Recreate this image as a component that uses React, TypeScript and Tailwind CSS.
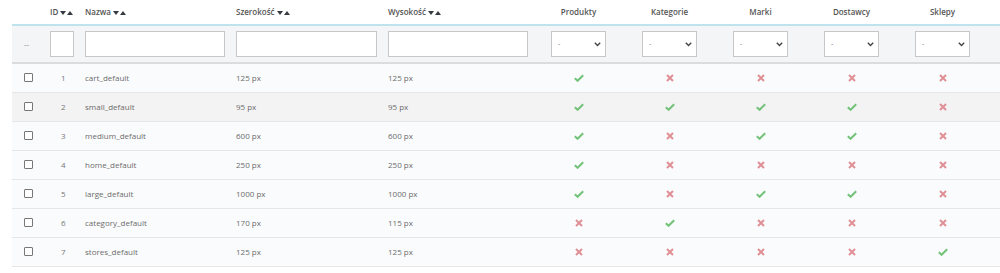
import React from "react";

type Row = { id: number; name: string; w: string; h: string; f: boolean[] };

const rows: Row[] = [
  { id: 1, name: "cart_default", w: "125 px", h: "125 px", f: [true, false, false, false, false] },
  { id: 2, name: "small_default", w: "95 px", h: "95 px", f: [true, true, true, true, false] },
  { id: 3, name: "medium_default", w: "600 px", h: "600 px", f: [true, false, true, true, false] },
  { id: 4, name: "home_default", w: "250 px", h: "250 px", f: [true, false, false, false, false] },
  { id: 5, name: "large_default", w: "1000 px", h: "1000 px", f: [true, false, true, true, false] },
  { id: 6, name: "category_default", w: "170 px", h: "115 px", f: [false, true, false, false, false] },
  { id: 7, name: "stores_default", w: "125 px", h: "125 px", f: [false, false, false, false, true] },
];

const Check = () => (
  <svg width="10" height="8" viewBox="0 0 10 8" className="inline-block">
    <path d="M0.8 4.2 L3.6 6.8 L9.2 1.2" fill="none" stroke="#72c279" strokeWidth="2" />
  </svg>
);

const Cross = () => (
  <svg width="8" height="8" viewBox="0 0 8 8" className="inline-block">
    <path d="M1 1 L7 7 M7 1 L1 7" fill="none" stroke="#e08f95" strokeWidth="2" />
  </svg>
);

const Sort = () => (
  <span className="ml-[2px] inline-flex items-center gap-[1px] align-middle">
    <svg width="6" height="4" viewBox="0 0 6 4"><path d="M0 0 H6 L3 4 Z" fill="#363a41" /></svg>
    <svg width="6" height="4" viewBox="0 0 6 4"><path d="M0 4 H6 L3 0 Z" fill="#363a41" /></svg>
  </span>
);

const Select = () => (
  <div className="mx-auto flex h-[26px] w-[55px] items-center justify-between border border-[#c7c7c7] bg-white pl-[6px] pr-[4px]">
    <span className="text-[7px] text-[#777]">-</span>
    <svg width="7" height="5" viewBox="0 0 7 5"><path d="M0.8 0.8 L3.5 3.6 L6.2 0.8" fill="none" stroke="#444" strokeWidth="1.4" /></svg>
  </div>
);

export default function App() {
  return (
    <div className="h-[273px] w-[1000px] bg-white pl-[12px]" style={{ fontFamily: '"Open Sans", "Liberation Sans", sans-serif' }}>
      <table className="table-fixed border-collapse text-[8px] text-[#6c6c6c]" style={{ width: 988 }}>
        <colgroup>
          <col className="w-[33px]" />
          <col className="w-[35px]" />
          <col className="w-[151px]" />
          <col className="w-[152px]" />
          <col className="w-[150px]" />
          <col className="w-[91px]" />
          <col className="w-[91px]" />
          <col className="w-[91px]" />
          <col className="w-[91px]" />
          <col className="w-[91px]" />
          <col className="w-[12px]" />
        </colgroup>
        <thead>
          <tr className="h-[25px] border-b-[2px] border-[#bfe3ec] text-left font-semibold text-[#555]">
            <th></th>
            <th className="pl-[5px] font-semibold">ID<Sort /></th>
            <th className="pl-[5px] font-semibold">Nazwa<Sort /></th>
            <th className="pl-[5px] font-semibold">Szerokość<Sort /></th>
            <th className="pl-[5px] font-semibold">Wysokość<Sort /></th>
            <th className="text-center font-semibold">Produkty</th>
            <th className="text-center font-semibold">Kategorie</th>
            <th className="text-center font-semibold">Marki</th>
            <th className="text-center font-semibold">Dostawcy</th>
            <th className="text-center font-semibold">Sklepy</th>
            <th></th>
          </tr>
          <tr className="h-[38px] border-b-[2px] border-[#dcdcdc] bg-[#f4f5f6]">
            <td className="pl-[12px] align-middle text-[#888]">--</td>
            <td className="pl-[5px] pr-[6px]"><div className="h-[26px] w-[24px] border border-[#c7c7c7] bg-white" /></td>
            <td className="px-[5px]"><div className="h-[26px] w-[140px] border border-[#c7c7c7] bg-white" /></td>
            <td className="px-[5px]"><div className="h-[26px] w-[141px] border border-[#c7c7c7] bg-white" /></td>
            <td className="px-[5px]"><div className="h-[26px] w-[140px] border border-[#c7c7c7] bg-white" /></td>
            <td><Select /></td>
            <td><Select /></td>
            <td><Select /></td>
            <td><Select /></td>
            <td><Select /></td>
            <td></td>
          </tr>
        </thead>
        <tbody>
          {rows.map((r) => (
            <tr
              key={r.id}
              className={`h-[29px] border-b border-[#e6e6e6] ${r.id === 2 ? "bg-[#f3f3f3]" : "bg-[#fafbfc]"}`}
            >
              <td className="pl-[12px] align-middle">
                <div className="h-[9px] w-[9px] rounded-[1px] border border-[#777] bg-white" />
              </td>
              <td className="pl-[16px] text-[#777]">{r.id}</td>
              <td className="pl-[5px]">{r.name}</td>
              <td className="pl-[5px]">{r.w}</td>
              <td className="pl-[5px]">{r.h}</td>
              {r.f.map((v, i) => (
                <td key={i} className="text-center leading-none">
                  {v ? <Check /> : <Cross />}
                </td>
              ))}
              <td></td>
            </tr>
          ))}
        </tbody>
      </table>
    </div>
  );
}
